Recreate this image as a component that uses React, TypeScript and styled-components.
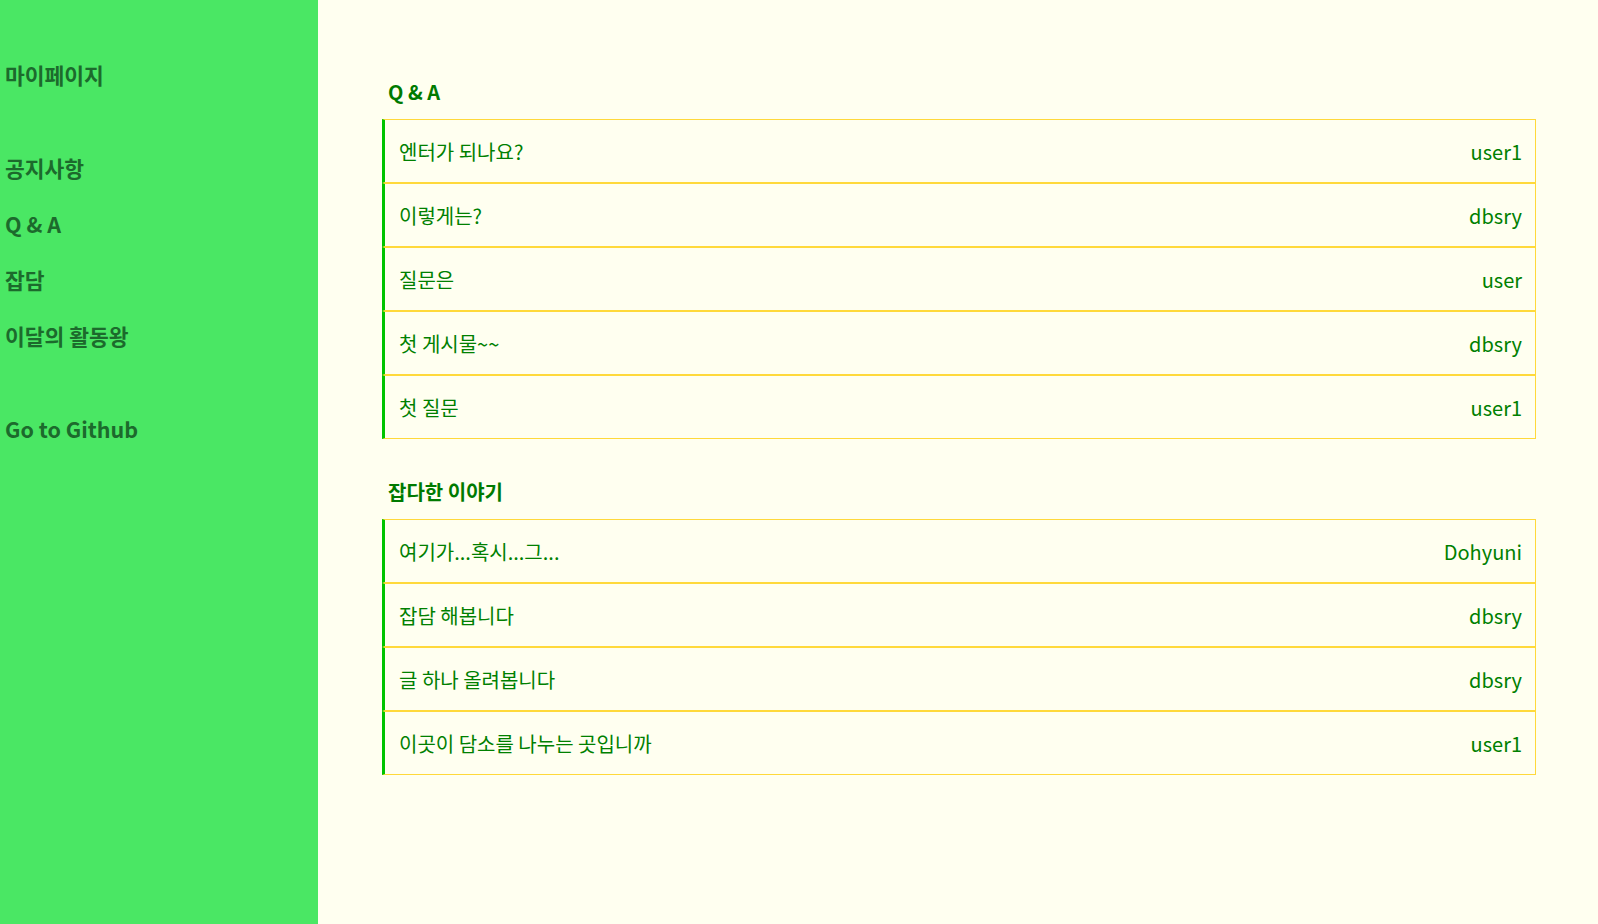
import React from 'react'
import styled, { createGlobalStyle } from 'styled-components'

const QNA = [
    { title: '엔터가 되나요?', writer: 'user1' },
    { title: '이렇게는?', writer: 'dbsry' },
    { title: '질문은', writer: 'user' },
    { title: '첫 게시물~~', writer: 'dbsry' },
    { title: '첫 질문', writer: 'user1' },
]

const FREE = [
    { title: '여기가...혹시...그...', writer: 'Dohyuni' },
    { title: '잡담 해봅니다', writer: 'dbsry' },
    { title: '글 하나 올려봅니다', writer: 'dbsry' },
    { title: '이곳이 담소를 나누는 곳입니까', writer: 'user1' },
]

const MENU = ['공지사항', 'Q & A', '잡담', '이달의 활동왕']

const App: React.FC = () => {
    return (
        <>
            <GlobalStyle />
            <Layout>
                <Sidebar>
                    <NavItem>마이페이지</NavItem>
                    <NavGroup>
                        {MENU.map(m => <NavItem key={m}>{m}</NavItem>)}
                    </NavGroup>
                    <NavItem>Go to Github</NavItem>
                </Sidebar>
                <Main>
                    <Section>
                        <SectionTitle>Q &amp; A</SectionTitle>
                        <List>
                            {QNA.map(({ title, writer }, i) => (
                                <Row key={i}>
                                    <span>{title}</span>
                                    <span>{writer}</span>
                                </Row>
                            ))}
                        </List>
                    </Section>
                    <Section>
                        <SectionTitle>잡다한 이야기</SectionTitle>
                        <List>
                            {FREE.map(({ title, writer }, i) => (
                                <Row key={i}>
                                    <span>{title}</span>
                                    <span>{writer}</span>
                                </Row>
                            ))}
                        </List>
                    </Section>
                </Main>
            </Layout>
        </>
    )
}

export default App

const GlobalStyle = createGlobalStyle`
    html, body {
        margin: 0;
        padding: 0;
        background: #fffff0;
        font-family: "Noto Sans CJK KR", "Noto Sans", sans-serif;
    }
`

const Layout = styled.div`
    display: flex;
    min-height: 924px;
`

const Sidebar = styled.nav`
    width: 318px;
    flex-shrink: 0;
    background-color: #4ae764;
    padding: 47px 0 0 5px;
    box-sizing: border-box;
    display: flex;
    flex-direction: column;
    gap: 37px;
`

const NavGroup = styled.div`
    display: flex;
    flex-direction: column;
`

const NavItem = styled.div`
    height: 56px;
    line-height: 56px;
    font-size: 21.5px;
    font-weight: 700;
    color: #1c6a2c;
    cursor: pointer;
`

const Main = styled.main`
    flex: 1;
    padding: 78px 62px 0 64px;
    display: flex;
    flex-direction: column;
    gap: 39px;
`

const Section = styled.section`
    display: flex;
    flex-direction: column;
`

const SectionTitle = styled.h2`
    margin: 0 0 14px;
    padding-left: 6px;
    font-size: 20px;
    line-height: 27px;
    font-weight: 700;
    color: #007a00;
`

const List = styled.div`
    display: flex;
    flex-direction: column;
`

const Row = styled.div`
    height: 64px;
    box-sizing: border-box;
    display: flex;
    align-items: center;
    justify-content: space-between;
    padding: 0 13px 0 14px;
    border: 1px solid #ffd93b;
    border-left: 3px solid #00c400;
    font-size: 20px;
    color: green;
`
